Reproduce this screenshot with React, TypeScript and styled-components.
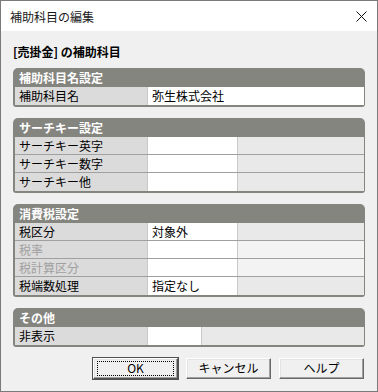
import React from "react";
import styled, { createGlobalStyle } from "styled-components";

const Global = createGlobalStyle`
  html, body { margin: 0; padding: 0; background: #f0f0f0; }
  * { box-sizing: border-box; }
`;

const Window = styled.div`
  width: 378px;
  height: 392px;
  border: 1px solid #7a7a7a;
  background: #f0f0f0;
  display: flex;
  flex-direction: column;
  font-family: "Noto Sans CJK JP", "Noto Sans", sans-serif;
  font-size: 12px;
  color: #000;
`;

const TitleBar = styled.div`
  height: 30px;
  background: #fff;
  display: flex;
  align-items: center;
  justify-content: space-between;
  padding: 0 10px 0 9px;
  flex: none;
`;

const Title = styled.span`
  font-size: 12px;
  color: #1a1a1a;
`;

const Body = styled.div`
  flex: 1;
  padding: 12px 12px 0 12px;
  display: flex;
  flex-direction: column;
  gap: 11px;
`;

const Heading = styled.div`
  font-weight: bold;
  line-height: 15px;
  height: 14px;
  padding-top: 1px;
`;

const Panel = styled.div`
  background: #85857f;
  border-radius: 5px 5px 3px 3px;
  padding: 0 1px 2px 2px;
`;

const PanelHeader = styled.div`
  height: 19px;
  line-height: 19px;
  color: #fff;
  font-weight: bold;
  padding-left: 4px;
`;

const Row = styled.div<{ $cols: string }>`
  display: grid;
  grid-template-columns: ${(p) => p.$cols};
  height: 18px;
  border-bottom: 1px solid #a0a0a0;
  &:last-child { border-bottom: none; }
`;

const Label = styled.div<{ $disabled?: boolean }>`
  background: #dcdbdb;
  border-right: 1px solid #c8c8c8;
  padding-left: 4px;
  line-height: 17px;
  color: ${(p) => (p.$disabled ? "#a0a0a0" : "#000")};
  white-space: nowrap;
`;

const Value = styled.div<{ $last?: boolean }>`
  background: #fff;
  border-right: ${(p) => (p.$last ? "none" : "1px solid #c8c8c8")};
  padding-left: 4px;
  line-height: 17px;
  white-space: nowrap;
`;

const Spare = styled.div<{ $disabled?: boolean }>`
  background: ${(p) => (p.$disabled ? "#f3f3f3" : "#e9e9e9")};
`;

const Buttons = styled.div`
  display: flex;
  justify-content: flex-end;
  gap: 8px;
  padding-right: 1px;
`;

const Button = styled.button<{ $default?: boolean }>`
  width: 85px;
  height: 21px;
  padding: 0 0 1px 0;
  display: flex;
  align-items: center;
  justify-content: center;
  font-family: "Noto Sans CJK JP", "Noto Sans", sans-serif;
  font-size: 12px;
  line-height: 14px;
  color: #000;
  background: #f0f0f0;
  border: 1px solid;
  border-color: #ffffff #696969 #696969 #ffffff;
  box-shadow: inset -1px -1px 0 #a0a0a0, inset 1px 1px 0 #e3e3e3;
  position: relative;
  ${(p) =>
    p.$default
      ? `outline: 1px solid #505050; outline-offset: 0; border-color: #ffffff #505050 #505050 #ffffff;
         &::after { content: ""; position: absolute; left: 3px; top: 2px; right: 3px; bottom: 2px; border: 1px dotted #000; }`
      : ""}
`;

const CloseIcon = () => (
  <svg width="11" height="11" viewBox="0 0 11 11">
    <path d="M0.5 0.5 L10.5 10.5 M10.5 0.5 L0.5 10.5" stroke="#111" strokeWidth="1" />
  </svg>
);

const FULL = "133px 1fr";
const THREE = "133px 90px 1fr";
const HIDE = "133px 54px 1fr";

export default function App() {
  return (
    <>
      <Global />
      <Window>
        <TitleBar>
          <Title>補助科目の編集</Title>
          <CloseIcon />
        </TitleBar>
        <Body>
          <Heading>[売掛金] の補助科目</Heading>
          <Panel>
            <PanelHeader>補助科目名設定</PanelHeader>
            <Row $cols={FULL}>
              <Label>補助科目名</Label>
              <Value $last>弥生株式会社</Value>
            </Row>
          </Panel>
          <Panel>
            <PanelHeader>サーチキー設定</PanelHeader>
            {["サーチキー英字", "サーチキー数字", "サーチキー他"].map((l) => (
              <Row key={l} $cols={THREE}>
                <Label>{l}</Label>
                <Value />
                <Spare />
              </Row>
            ))}
          </Panel>
          <Panel>
            <PanelHeader>消費税設定</PanelHeader>
            <Row $cols={THREE}>
              <Label>税区分</Label>
              <Value>対象外</Value>
              <Spare />
            </Row>
            <Row $cols={THREE}>
              <Label $disabled>税率</Label>
              <Value />
              <Spare $disabled />
            </Row>
            <Row $cols={THREE}>
              <Label $disabled>税計算区分</Label>
              <Value />
              <Spare $disabled />
            </Row>
            <Row $cols={THREE}>
              <Label>税端数処理</Label>
              <Value>指定なし</Value>
              <Spare />
            </Row>
          </Panel>
          <Panel>
            <PanelHeader>その他</PanelHeader>
            <Row $cols={HIDE}>
              <Label>非表示</Label>
              <Value />
              <Spare />
            </Row>
          </Panel>
          <Buttons>
            <Button $default>OK</Button>
            <Button>キャンセル</Button>
            <Button>ヘルプ</Button>
          </Buttons>
        </Body>
      </Window>
    </>
  );
}
